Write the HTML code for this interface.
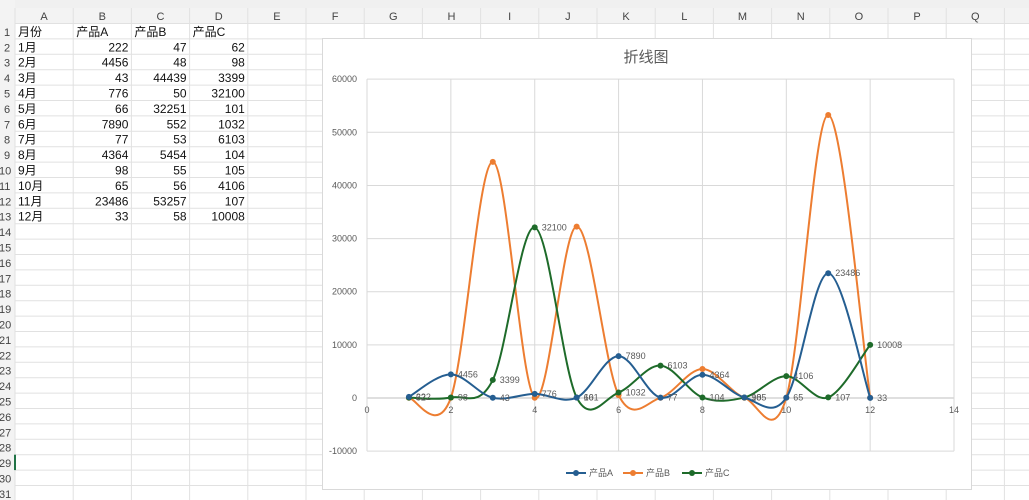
<!DOCTYPE html>
<html><head><meta charset="utf-8"><style>
body{margin:0;width:1029px;height:500px;overflow:hidden;background:#fff;font-family:"Liberation Sans","Noto Sans CJK SC",sans-serif;position:relative}
#s{position:absolute;left:0;top:0}
</style></head><body>
<svg id="s" width="1029" height="500" xmlns="http://www.w3.org/2000/svg"></svg>
<script>
const S=document.getElementById('s');let h='';
const top0=23.5,rh=15.4,cw=58.2,x0=15;
h+='<rect x="0" y="0" width="1029" height="8" fill="#f0f0f0"/>';
h+='<rect x="0" y="8" width="1029" height="'+(top0-8)+'" fill="#f3f3f3"/>';
h+='<rect x="0" y="0" width="'+x0+'" height="500" fill="#f3f3f3"/>';
for(let i=0;i<=31;i++){let y=top0+i*rh;h+='<line x1="'+x0+'" y1="'+y+'" x2="1029" y2="'+y+'" stroke="#e1e1e1" stroke-width="1"/>';}
for(let j=0;j<=18;j++){let x=x0+j*cw;h+='<line x1="'+x+'" y1="8" x2="'+x+'" y2="500" stroke="#e1e1e1" stroke-width="1"/>';}
const L='ABCDEFGHIJKLMNOPQ';
for(let j=0;j<17;j++)h+='<text x="'+(x0+j*cw+cw/2)+'" y="20" font-size="11" fill="#444" text-anchor="middle">'+L[j]+'</text>';
for(let i=1;i<=31;i++)h+='<text x="'+(i<10?4:-1)+'" y="'+(top0+i*rh-3)+'" font-size="11" fill="#444">'+i+'</text>';
h+='<rect x="14" y="'+(top0+28*rh)+'" width="2" height="'+rh+'" fill="#217346"/>';
const A=[222,4456,43,776,66,7890,77,4364,98,65,23486,33],B=[47,48,44439,50,32251,552,53,5454,55,56,53257,58],C=[62,98,3399,32100,101,1032,6103,104,105,4106,107,10008];
const rows=[['月份','产品A','产品B','产品C']];
for(let i=0;i<12;i++)rows.push([(i+1)+'月',A[i],B[i],C[i]]);
rows.forEach((r,i)=>{let y=top0+(i+1)*rh-3;
 r.forEach((v,j)=>{if(i==0||j==0)h+='<text x="'+(x0+j*cw+3)+'" y="'+y+'" font-size="12" fill="#111">'+v+'</text>';
 else h+='<text x="'+(x0+(j+1)*cw-3)+'" y="'+y+'" font-size="12" fill="#111" text-anchor="end">'+v+'</text>';});});
h+='<rect x="322.5" y="38.5" width="649" height="451" fill="#fff" stroke="#d9d9d9"/>';
h+='<text x="646" y="62" font-size="15" fill="#595959" text-anchor="middle">折线图</text>';
const X=v=>367+v*41.93,Y=v=>398-v*0.005314;
for(let k=-1;k<=6;k++){let y=Y(k*10000);h+='<line x1="367" y1="'+y+'" x2="954" y2="'+y+'" stroke="'+(k==0?'#bfbfbf':'#d9d9d9')+'"/>';
 h+='<text x="357" y="'+(y+3)+'" font-size="9" fill="#595959" text-anchor="end">'+(k*10000)+'</text>';}
for(let k=0;k<=7;k++){let x=X(2*k);h+='<line x1="'+x+'" y1="'+Y(60000)+'" x2="'+x+'" y2="'+Y(-10000)+'" stroke="#d9d9d9"/>';
 h+='<text x="'+x+'" y="413" font-size="9" fill="#595959" text-anchor="middle">'+(2*k)+'</text>';}
function curve(d,col,lab){let p=d.map((v,i)=>[X(i+1),Y(v)]);let s='M'+p[0];
 for(let i=0;i<p.length-1;i++){let p0=p[i-1]||p[i],p1=p[i],p2=p[i+1],p3=p[i+2]||p2,t=1/6;
  let c1=[p1[0]+(p2[0]-p0[0])*t,p1[1]+(p2[1]-p0[1])*t],c2=[p2[0]-(p3[0]-p1[0])*t,p2[1]-(p3[1]-p1[1])*t];
  s+=' C'+c1+' '+c2+' '+p2;}
 h+='<path d="'+s+'" fill="none" stroke="'+col+'" stroke-width="2"/>';
 p.forEach((q,i)=>{h+='<circle cx="'+q[0]+'" cy="'+q[1]+'" r="3" fill="'+col+'"/>';
  if(lab)h+='<text x="'+(q[0]+7)+'" y="'+(q[1]+3)+'" font-size="9" fill="#595959">'+d[i]+'</text>';});}
curve(B,'#ed7d31',false);curve(C,'#1e6b2a',true);curve(A,'#255e91',true);
[['产品A','#255e91',566],['产品B','#ed7d31',623],['产品C','#1e6b2a',682]].forEach(l=>{
 h+='<line x1="'+l[2]+'" y1="473" x2="'+(l[2]+20)+'" y2="473" stroke="'+l[1]+'" stroke-width="2"/><circle cx="'+(l[2]+10)+'" cy="473" r="3" fill="'+l[1]+'"/>';
 h+='<text x="'+(l[2]+23)+'" y="476" font-size="9" fill="#595959">'+l[0]+'</text>';});
S.innerHTML=h;
</script>
</body></html>
